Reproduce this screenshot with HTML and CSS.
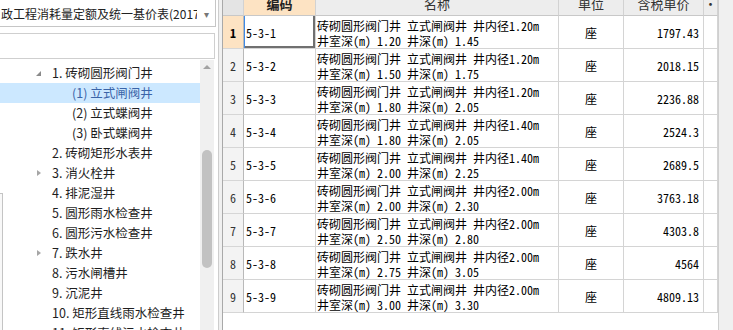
FILE: index.html
```html
<!DOCTYPE html>
<html lang="zh-CN">

<head>
  <meta charset="UTF-8">
  <title>定额库</title>
  <link rel="stylesheet" href="styles.css">
</head>

<body>
  <div class="left-panel">
    <div class="combo">
      <span class="combo-text">政工程消耗量定额及统一基价表(2017</span>
      <span class="combo-arrow">▾</span>
    </div>
    <div class="search-box"></div>
    <div class="tree">
      <div class="tree-list">
        <div class="tree-item level-1"><span class="toggle open"></span>1. 砖砌圆形阀门井</div>
        <div class="tree-item level-2 selected">(1) 立式闸阀井</div>
        <div class="tree-item level-2">(2) 立式蝶阀井</div>
        <div class="tree-item level-2">(3) 卧式蝶阀井</div>
        <div class="tree-item level-1">2. 砖砌矩形水表井</div>
        <div class="tree-item level-1"><span class="toggle closed"></span>3. 消火栓井</div>
        <div class="tree-item level-1">4. 排泥湿井</div>
        <div class="tree-item level-1">5. 圆形雨水检查井</div>
        <div class="tree-item level-1">6. 圆形污水检查井</div>
        <div class="tree-item level-1"><span class="toggle closed"></span>7. 跌水井</div>
        <div class="tree-item level-1">8. 污水闸槽井</div>
        <div class="tree-item level-1">9. 沉泥井</div>
        <div class="tree-item level-1">10. 矩形直线雨水检查井</div>
        <div class="tree-item level-1">11. 矩形直线污水检查井</div>
      </div>
      <div class="tree-scroll">
        <span class="scroll-up"></span>
        <div class="scroll-thumb"></div>
      </div>
    </div>
    <div class="back-box"></div>
  </div>

  <div class="splitter"></div>

  <div class="grid-area">
    <div class="grid" id="grid">
      <div class="hcell corner"></div>
      <div class="hcell current"><span>编码</span></div>
      <div class="hcell"><span>名称</span></div>
      <div class="hcell"><span>单位</span></div>
      <div class="hcell"><span>含税单价</span></div>
      <div class="hcell"><span>·</span></div>
    </div>
    <div class="vscroll"></div>
  </div>

  <script>
    const rows = [
      ['5-3-1', '1.20', '1.20', '1.45', '1797.43'],
      ['5-3-2', '1.20', '1.50', '1.75', '2018.15'],
      ['5-3-3', '1.20', '1.80', '2.05', '2236.88'],
      ['5-3-4', '1.40', '1.80', '2.05', '2524.3'],
      ['5-3-5', '1.40', '2.00', '2.25', '2689.5'],
      ['5-3-6', '2.00', '2.00', '2.30', '3763.18'],
      ['5-3-7', '2.00', '2.50', '2.80', '4303.8'],
      ['5-3-8', '2.00', '2.75', '3.05', '4564'],
      ['5-3-9', '2.00', '3.00', '3.30', '4809.13']
    ];
    const grid = document.getElementById('grid');

    rows.forEach((r, i) => {
      const current = i === 0;
      grid.insertAdjacentHTML('beforeend',
        '<div class="rowhead' + (current ? ' current' : '') + '">' + (i + 1) + '</div>' +
        '<div class="cell code' + (current ? ' focused' : '') + '">' + r[0] + '</div>' +
        '<div class="cell name">砖砌圆形阀门井 立式闸阀井 井内径' + r[1] + 'm<br>井室深(m) ' + r[2] + ' 井深(m) ' + r[3] + '</div>' +
        '<div class="cell unit">座</div>' +
        '<div class="cell price">' + r[4] + '</div>' +
        '<div class="cell"></div>');
    });
  </script>
</body>

</html>
```

FILE: styles.css
```css
body {
  margin: 0;
  width: 733px;
  height: 330px;
  overflow: hidden;
  display: flex;
  background-color: #fff;
  font-family: "Noto Sans CJK SC", "Microsoft YaHei", sans-serif;
  font-size: 12px;
  color: #1e1e1e;
}

/* left: library tree */
.left-panel {
  position: relative;
  width: 218px;
  flex: none;
  display: flex;
  flex-direction: column;
  overflow: hidden;
}

.combo {
  flex: none;
  height: 27px;
  margin: 0 2px 0 -1px;
  border: 1px solid #c6c6c6;
  border-top: none;
  box-sizing: border-box;
  display: flex;
  align-items: center;
  background-color: #fff;
}

.combo-text {
  flex: 1;
  min-width: 0;
  overflow: hidden;
  white-space: nowrap;
  padding-left: 1px;
  font-size: 12px;
  color: #222;
}

.combo-arrow {
  width: 18px;
  text-align: center;
  font-size: 10px;
  color: #777;
}

.search-box {
  flex: none;
  height: 26px;
  margin: 6px 3px 0 -1px;
  border: 1px solid #cfcfcf;
  box-sizing: border-box;
}

.tree {
  flex: 1;
  display: flex;
  padding-top: 1px;
}

.tree-list {
  flex: 1;
  padding-top: 3px;
}

.tree-item {
  height: 20px;
  line-height: 20px;
  white-space: nowrap;
  font-size: 12.5px;
}

.level-1 {
  padding-left: 52px;
}

.level-2 {
  padding-left: 72px;
}

.tree-item.selected {
  background-color: #cce8ff;
  color: #3a64a8;
}

.toggle {
  display: inline-block;
  width: 16px;
  height: 20px;
  margin-left: -16px;
  vertical-align: top;
  position: relative;
}

.toggle.open::before {
  content: "";
  position: absolute;
  left: 0;
  top: 8px;
  border-style: solid;
  border-width: 0 0 5px 5px;
  border-color: transparent transparent #8a8a8a transparent;
}

.toggle.closed::before {
  content: "";
  position: absolute;
  left: 1px;
  top: 7px;
  border-style: solid;
  border-width: 3.5px 0 3.5px 4px;
  border-color: transparent transparent transparent #a6a6a6;
}

.tree-scroll {
  position: relative;
  width: 14px;
  margin-right: 4px;
  background-color: #f0f0f0;
}

.scroll-up {
  position: absolute;
  left: 3px;
  top: 5px;
  border-style: solid;
  border-width: 0 4px 4px 4px;
  border-color: transparent transparent #a3a3a3 transparent;
}

.scroll-thumb {
  position: absolute;
  left: 2px;
  top: 90px;
  width: 10px;
  height: 118px;
  border-radius: 5px;
  background-color: #c2c2c2;
}

.back-box {
  position: absolute;
  left: -12px;
  top: 193px;
  width: 15px;
  height: 160px;
  border: 1px solid #c4c4c4;
  box-sizing: border-box;
  background-color: #f8f8f8;
}

.splitter {
  width: 4px;
  flex: none;
  box-sizing: border-box;
  border-left: 1px solid #cdcdcd;
  background-color: #f0f0f0;
}

/* right: price grid */
.grid-area {
  flex: 1;
  display: flex;
  min-width: 0;
}

.grid {
  flex: 1;
  align-self: stretch;
  border-left: 1px solid #a9a9a9;
  display: grid;
  grid-template-columns: 21px 72px 243px 65px 80px 14px;
  grid-template-rows: 16px;
  grid-auto-rows: 33px;
  align-content: start;
  font-family: "Noto Sans Mono CJK SC", "Liberation Mono", "Noto Sans CJK SC", monospace;
  font-size: 12px;
  color: #000;
}

.hcell {
  box-sizing: border-box;
  border-right: 1px solid #d2d2d2;
  border-bottom: 1px solid #c8c8c8;
  background-color: #ededed;
  display: flex;
  align-items: flex-end;
  justify-content: center;
  overflow: hidden;
  padding-bottom: 3px;
  font-family: "Noto Sans CJK SC", sans-serif;
  font-size: 13px;
  line-height: 17px;
  color: #333;
}

.hcell.corner {
  background-color: #e4e4e4;
}

.hcell.current {
  background-color: #fde3c3;
  font-weight: bold;
  color: #222;
}

.rowhead {
  box-sizing: border-box;
  border-right: 1px solid #b9b9b9;
  border-bottom: 1px solid #d6d6d6;
  background-color: #f3f3f3;
  display: flex;
  align-items: center;
  justify-content: center;
  color: #333;
}

.rowhead.current {
  background-color: #fde3c3;
  font-weight: bold;
  color: #000;
}

.cell {
  box-sizing: border-box;
  border-right: 1px solid #d4d4d4;
  border-bottom: 1px solid #d4d4d4;
  display: flex;
  align-items: center;
  white-space: nowrap;
  overflow: hidden;
}

.code {
  padding-left: 2px;
}

.code.focused {
  box-shadow: inset 1px 0 #3f8ae6, inset -2px -2px #707070;
}

.name {
  padding: 1px 0 0 1px;
  line-height: 15px;
}

.unit {
  justify-content: center;
}

.price {
  justify-content: flex-end;
  padding-right: 4px;
}

.vscroll {
  width: 15px;
  flex: none;
  box-sizing: border-box;
  border-left: 1px solid #cfcfcf;
  background-color: #f0f0f0;
}
```
